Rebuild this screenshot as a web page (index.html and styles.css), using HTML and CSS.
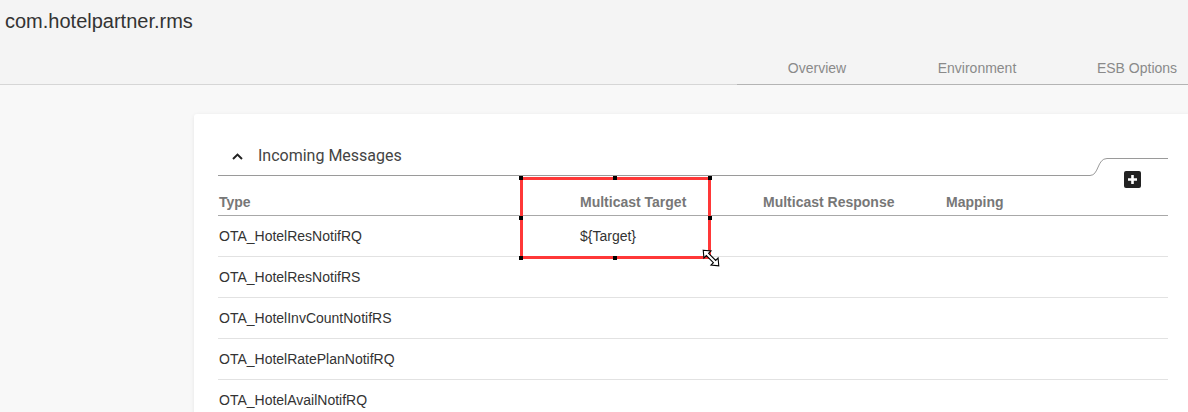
FILE: index.html
```html
<!DOCTYPE html>
<html>
<head>
<meta charset="utf-8">
<link rel="stylesheet" href="styles.css">
</head>
<body>
<header class="topbar">
  <div class="app-title">com.hotelpartner.rms</div>
  <nav class="tabs">
    <div class="tab">Overview</div>
    <div class="tab">Environment</div>
    <div class="tab">ESB Options</div>
  </nav>
</header>
<main class="main">
  <section class="card">
    <div class="section-head">
      <div class="head-left">
        <svg class="chevron" width="11" height="7" viewBox="0 0 11 7"><polyline points="1,6 5.5,1.6 10,6" fill="none" stroke="#222" stroke-width="2"/></svg>
        <span class="head-title">Incoming Messages</span>
      </div>
      <svg class="head-curve" width="17" height="18" viewBox="0 0 17 18"><path d="M0 17.5 C9 17.5 7 0.5 17 0.5" fill="none" stroke="#9a9a9a" stroke-width="1"/></svg>
      <div class="head-right">
        <svg class="add-btn" width="17" height="17" viewBox="0 0 17 17"><rect width="17" height="17" rx="2" fill="#222"/><path d="M8.5 4 V13 M4 8.5 H13" stroke="#fff" stroke-width="2.6"/></svg>
      </div>
    </div>
    <div class="grid head-row">
      <div>Type</div>
      <div>Multicast Target</div>
      <div>Multicast Response</div>
      <div>Mapping</div>
    </div>
    <div class="grid row"><div>OTA_HotelResNotifRQ</div><div>${Target}</div><div></div><div></div></div>
    <div class="grid row"><div>OTA_HotelResNotifRS</div><div></div><div></div><div></div></div>
    <div class="grid row"><div>OTA_HotelInvCountNotifRS</div><div></div><div></div><div></div></div>
    <div class="grid row"><div>OTA_HotelRatePlanNotifRQ</div><div></div><div></div><div></div></div>
    <div class="grid row"><div>OTA_HotelAvailNotifRQ</div><div></div><div></div><div></div></div>

    <div class="selection">
      <div class="sel-frame"></div>
      <span class="handle h-tl"></span>
      <span class="handle h-tm"></span>
      <span class="handle h-tr"></span>
      <span class="handle h-ml"></span>
      <span class="handle h-mr"></span>
      <span class="handle h-bl"></span>
      <span class="handle h-bm"></span>
      <svg class="resize-cursor" width="18" height="18" viewBox="0 0 18 18"><g transform="translate(9 9) rotate(45) translate(-11 0)"><polygon points="0,0 6,-5 6,-1.6 16,-1.6 16,-5 22,0 16,5 16,1.6 6,1.6 6,5" fill="#fff" stroke="#000" stroke-width="1.1" stroke-linejoin="miter"/></g></svg>
    </div>
  </section>
</main>
</body>
</html>
```

FILE: styles.css
```css
html, body {
  margin: 0;
  padding: 0;
}
body {
  background: #f8f8f8;
  font-family: "Liberation Sans", Arial, sans-serif;
  overflow: hidden;
  width: 1188px;
  height: 412px;
}
.topbar {
  height: 84px;
  background: #f4f4f4;
  border-bottom: 1px solid #d6d6d6;
}
.app-title {
  padding: 10px 0 0 5px;
  font-size: 20px;
  line-height: 23px;
  color: #333;
}
.tabs {
  display: flex;
  width: 480px;
  margin-left: 737px;
  margin-top: 27px;
  border-bottom: 1px solid #b4b4b4;
}
.tab {
  flex: none;
  width: 160px;
  text-align: center;
  font-size: 14px;
  line-height: 16px;
  padding-bottom: 8px;
  color: #8a8a8a;
}
.main {
  padding: 29px 0 0 194px;
}
.card {
  position: relative;
  width: 950px;
  height: 400px;
  padding: 23px 24px 0;
  background: #fff;
  border-radius: 3px;
  box-shadow: 0 1px 4px rgba(0,0,0,0.08);
}
.section-head {
  display: flex;
  align-items: flex-start;
  height: 39px;
}
.head-left {
  flex: 1;
  display: flex;
  align-items: center;
  height: 38px;
  border-bottom: 1px solid #9a9a9a;
}
.chevron {
  margin-left: 14px;
  margin-right: 15px;
}
.head-title {
  font-family: Roboto, "Liberation Sans", sans-serif;
  font-size: 16px;
  line-height: 38px;
  color: #444;
}
.head-curve {
  flex: none;
  margin-top: 21px;
}
.head-right {
  flex: none;
  width: 61px;
  margin-top: 21px;
  border-top: 1px solid #9a9a9a;
}
.add-btn {
  display: block;
  margin: 12px 0 0 17px;
}
.grid {
  display: grid;
  grid-template-columns: 361px 183px 183px 1fr;
}
.grid > div {
  padding-left: 1px;
}
.head-row {
  height: 39px;
  align-items: end;
  border-bottom: 1px solid #a8a8a8;
  font-weight: bold;
  font-size: 14px;
  line-height: 16px;
  color: #777;
}
.head-row > div {
  padding-bottom: 5px;
}
.row {
  height: 40px;
  align-items: center;
  border-bottom: 1px solid #e2e2e2;
  font-size: 14px;
  color: #333;
}
.selection {
  position: absolute;
  left: 326px;
  top: 63px;
  width: 191px;
  height: 82px;
}
.sel-frame {
  position: absolute;
  inset: 0;
  border: 3px solid #ff3838;
}
.handle {
  position: absolute;
  width: 4px;
  height: 4px;
  background: #000;
}
.h-tl { left: -1px; top: -1px; }
.h-tm { left: 93px; top: -1px; }
.h-tr { left: 188px; top: -1px; }
.h-ml { left: -1px; top: 39px; }
.h-mr { left: 188px; top: 39px; }
.h-bl { left: -1px; top: 79px; }
.h-bm { left: 93px; top: 79px; }
.resize-cursor {
  position: absolute;
  left: 182px;
  top: 72px;
}
```
